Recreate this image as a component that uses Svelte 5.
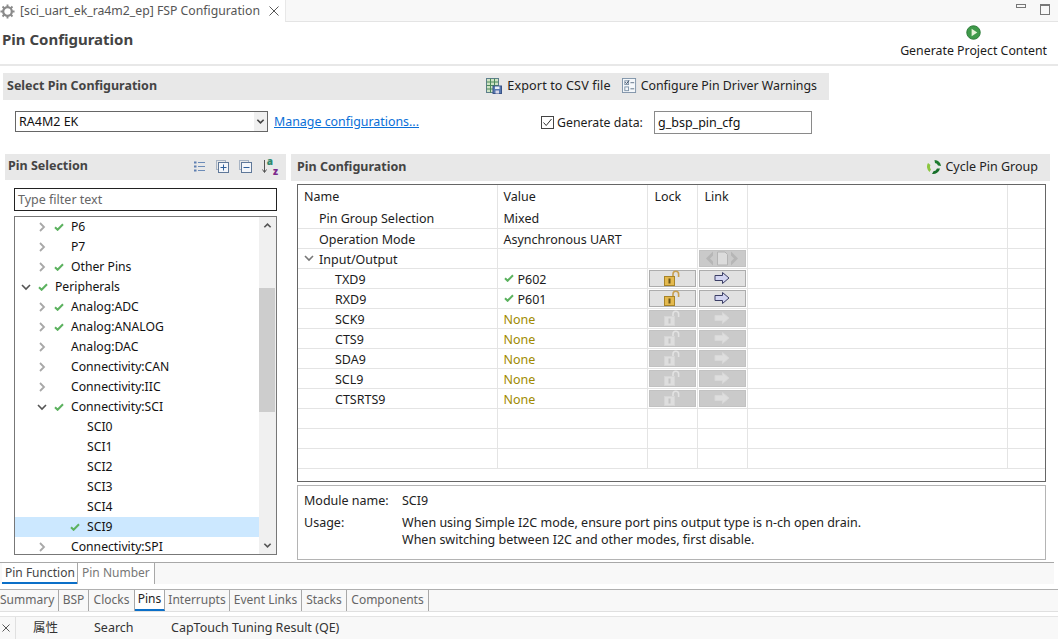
<script lang="ts">
	type TreeRow = { label: string; depth: number; open?: boolean; leaf?: boolean; ok?: boolean; selected?: boolean };
	type PinRow = { name: string; depth: number; value?: string; state?: 'ok' | 'none'; open?: boolean; controls?: 'on' | 'off' | 'group' };

	const tree: TreeRow[] = [
		{ label: 'P6', depth: 1, ok: true },
		{ label: 'P7', depth: 1 },
		{ label: 'Other Pins', depth: 1, ok: true },
		{ label: 'Peripherals', depth: 0, open: true, ok: true },
		{ label: 'Analog:ADC', depth: 1, ok: true },
		{ label: 'Analog:ANALOG', depth: 1, ok: true },
		{ label: 'Analog:DAC', depth: 1 },
		{ label: 'Connectivity:CAN', depth: 1 },
		{ label: 'Connectivity:IIC', depth: 1 },
		{ label: 'Connectivity:SCI', depth: 1, open: true, ok: true },
		{ label: 'SCI0', depth: 2, leaf: true },
		{ label: 'SCI1', depth: 2, leaf: true },
		{ label: 'SCI2', depth: 2, leaf: true },
		{ label: 'SCI3', depth: 2, leaf: true },
		{ label: 'SCI4', depth: 2, leaf: true },
		{ label: 'SCI9', depth: 2, leaf: true, ok: true, selected: true },
		{ label: 'Connectivity:SPI', depth: 1 }
	];

	const pins: PinRow[] = [
		{ name: 'Pin Group Selection', depth: 1, value: 'Mixed' },
		{ name: 'Operation Mode', depth: 1, value: 'Asynchronous UART' },
		{ name: 'Input/Output', depth: 0, open: true, controls: 'group' },
		{ name: 'TXD9', depth: 2, value: 'P602', state: 'ok', controls: 'on' },
		{ name: 'RXD9', depth: 2, value: 'P601', state: 'ok', controls: 'on' },
		{ name: 'SCK9', depth: 2, value: 'None', state: 'none', controls: 'off' },
		{ name: 'CTS9', depth: 2, value: 'None', state: 'none', controls: 'off' },
		{ name: 'SDA9', depth: 2, value: 'None', state: 'none', controls: 'off' },
		{ name: 'SCL9', depth: 2, value: 'None', state: 'none', controls: 'off' },
		{ name: 'CTSRTS9', depth: 2, value: 'None', state: 'none', controls: 'off' },
		{ name: '', depth: 0 },
		{ name: '', depth: 0 },
		{ name: '', depth: 0 }
	];

	const pageTabs = [
		{ label: 'Summary', width: 59 },
		{ label: 'BSP', width: 30 },
		{ label: 'Clocks', width: 46 },
		{ label: 'Pins', width: 30 },
		{ label: 'Interrupts', width: 65 },
		{ label: 'Event Links', width: 72 },
		{ label: 'Stacks', width: 45 },
		{ label: 'Components', width: 82 }
	];
</script>

{#snippet check()}
	<svg class="check" viewBox="0 0 10 8" width="10" height="8">
		<path d="M1 4.2 L3.6 6.8 L9 1.2" fill="none" stroke="#5cb25f" stroke-width="2" />
	</svg>
{/snippet}

{#snippet chevron(open: boolean, color: string)}
	<svg class="chev" viewBox="0 0 10 10" width="10" height="10">
		{#if open}
			<path d="M1 3 L5 7 L9 3" fill="none" stroke={color} stroke-width="1.6" />
		{:else}
			<path d="M3 1 L7 5 L3 9" fill="none" stroke={color} stroke-width="1.8" />
		{/if}
	</svg>
{/snippet}

{#snippet lock(on: boolean)}
	<svg viewBox="0 0 16 16" width="16" height="16">
		<path d="M9 7 V4 A2.8 2.8 0 0 1 14.6 4 V7" fill="none" stroke={on ? '#c8a050' : '#e2e2e2'} stroke-width="1.6" />
		<rect x="0.5" y="6.5" width="10" height="9" fill={on ? '#e3b94e' : '#dedede'} stroke={on ? '#a88428' : '#d6d6d6'} />
		<rect x="4.5" y="8.5" width="2" height="5" fill={on ? '#6b5518' : '#c4c4c4'} />
	</svg>
{/snippet}

{#snippet arrow(on: boolean)}
	<svg viewBox="0 0 16 14" width="16" height="14">
		<path d="M1 4.5 H8.5 V1.5 L15 7 L8.5 12.5 V9.5 H1 Z" fill={on ? '#d4d6f2' : '#dedede'} stroke={on ? '#3c3f66' : '#d8d8d8'} />
	</svg>
{/snippet}

<div class="page">
	<div class="tabbar">
		<div class="editor-tab">
			<svg viewBox="0 0 16 16" width="15" height="15">
				<circle cx="8" cy="8" r="4.6" fill="none" stroke="#8a8a8a" stroke-width="2.4" />
				<path d="M8 0.5 V3 M8 13 V15.5 M0.5 8 H3 M13 8 H15.5 M2.7 2.7 L4.5 4.5 M11.5 11.5 L13.3 13.3 M2.7 13.3 L4.5 11.5 M11.5 4.5 L13.3 2.7" stroke="#8a8a8a" stroke-width="2" />
			</svg>
			<span class="editor-title">[sci_uart_ek_ra4m2_ep] FSP Configuration</span>
			<svg class="close" viewBox="0 0 10 10" width="10" height="10">
				<path d="M0.5 0.5 L9.5 9.5 M9.5 0.5 L0.5 9.5" stroke="#444" stroke-width="0.9" />
			</svg>
		</div>
		<div class="tabbar-rest">
			<span class="win-min"></span>
			<span class="win-max"></span>
		</div>
	</div>

	<header class="head">
		<h1>Pin Configuration</h1>
		<div class="generate">
			<svg viewBox="0 0 16 16" width="15" height="15">
				<circle cx="8" cy="8" r="7.2" fill="#3f9a4a" stroke="#2c7a38" />
				<path d="M6 4 L12 8 L6 12 Z" fill="#e6f3d8" />
			</svg>
			<span>Generate Project Content</span>
		</div>
	</header>

	<section class="select">
		<div class="section-bar select-bar">
			<strong>Select Pin Configuration</strong>
			<div class="bar-actions">
				<span class="action export">
					<svg viewBox="0 0 16 16" width="16" height="16">
						<rect x="0.5" y="0.5" width="12" height="14" fill="#cfe3c4" stroke="#5d7f8c" />
						<path d="M0.5 4 H12.5 M0.5 7.5 H12.5 M0.5 11 H12.5 M4.5 0.5 V15 M8.5 0.5 V15" stroke="#4d8a5a" />
						<rect x="7" y="8" width="8.5" height="7.5" fill="#5878b0" stroke="#3a5488" />
						<rect x="9" y="8.5" width="4.5" height="2.5" fill="#e8eef8" />
						<rect x="9.5" y="12.5" width="3.5" height="3" fill="#d8d8e8" />
					</svg>
					Export to CSV file
				</span>
				<span class="action warnings">
					<svg viewBox="0 0 16 16" width="15" height="15">
						<rect x="0.5" y="0.5" width="14" height="15" fill="#f4f7fa" stroke="#7f93a8" />
						<rect x="3" y="3" width="4" height="4" fill="none" stroke="#7f93a8" />
						<path d="M3.5 4.5 L5 6 L7.5 2.5" fill="none" stroke="#3a4a60" />
						<rect x="3" y="9.5" width="4" height="4" fill="none" stroke="#7f93a8" />
						<path d="M9 5 H13 M9 11.5 H13" stroke="#5f7388" />
					</svg>
					Configure Pin Driver Warnings
				</span>
			</div>
		</div>
		<div class="select-form">
			<div class="combo">
				<span>RA4M2 EK</span>
				<span class="combo-btn">
					<svg viewBox="0 0 10 10" width="9" height="9"><path d="M1.5 3 L5 6.5 L8.5 3" fill="none" stroke="#444" stroke-width="1.8" /></svg>
				</span>
			</div>
			<a class="manage" href="#manage">Manage configurations...</a>
			<span class="gen-check">
				<svg viewBox="0 0 13 13" width="13" height="13">
					<rect x="0.5" y="0.5" width="12" height="12" fill="#fff" stroke="#444" />
					<path d="M2.5 6.5 L5.2 9.5 L10.5 3" fill="none" stroke="#333" />
				</svg>
				Generate data:
			</span>
			<div class="gen-input">g_bsp_pin_cfg</div>
		</div>
	</section>

	<div class="columns">
		<section class="left">
			<div class="section-bar left-bar">
				<strong>Pin Selection</strong>
				<div class="tools">
					<svg viewBox="0 0 13 13" width="13" height="13">
						<path d="M1 2.5 H3.5 M1 6.5 H3.5 M1 10.5 H3.5" stroke="#5f7fb0" stroke-width="2" />
						<path d="M5 2.5 H12 M5 6.5 H12 M5 10.5 H12" stroke="#6c8cb8" />
					</svg>
					<svg viewBox="0 0 13 13" width="13" height="13">
						<rect x="0.5" y="0.5" width="9" height="9" fill="none" stroke="#a8b4c4" />
						<rect x="2.5" y="2.5" width="10" height="10" fill="#f4f6fa" stroke="#5f7899" />
						<path d="M7.5 4.5 V10.5 M4.5 7.5 H10.5" stroke="#2f5f9a" />
					</svg>
					<svg viewBox="0 0 13 13" width="13" height="13">
						<rect x="0.5" y="0.5" width="9" height="9" fill="none" stroke="#a8b4c4" />
						<rect x="2.5" y="2.5" width="10" height="10" fill="#f4f6fa" stroke="#5f7899" />
						<path d="M4.5 7.5 H10.5" stroke="#2f5f9a" />
					</svg>
					<span class="sort">
						<svg viewBox="0 0 5 15" width="5" height="15"><path d="M2.5 1 V13 M0.5 10.5 L2.5 13.5 L4.5 10.5" fill="none" stroke="#555" /></svg>
						<span class="sort-az"><b class="a">a</b><b class="z">z</b></span>
					</span>
				</div>
			</div>
			<div class="filter">Type filter text</div>
			<div class="tree">
				<div class="tree-rows">
					{#each tree as row}
						<div class="tree-row" class:selected={row.selected} data-depth={row.depth}>
							<span class="slot">
								{#if !row.leaf}{@render chevron(!!row.open, row.open ? '#555' : '#a8a8a8')}{/if}
							</span>
							<span class="slot">
								{#if row.ok}{@render check()}{/if}
							</span>
							<span class="tree-label">{row.label}</span>
						</div>
					{/each}
				</div>
				<div class="scroll">
					<span class="scroll-arrow">
						<svg viewBox="0 0 10 10" width="9" height="9"><path d="M1.5 7 L5 3.5 L8.5 7" fill="none" stroke="#555" stroke-width="1.8" /></svg>
					</span>
					<span class="scroll-gap"></span>
					<span class="scroll-thumb"></span>
					<span class="scroll-rest"></span>
					<span class="scroll-arrow">
						<svg viewBox="0 0 10 10" width="9" height="9"><path d="M1.5 3 L5 6.5 L8.5 3" fill="none" stroke="#555" stroke-width="1.8" /></svg>
					</span>
				</div>
			</div>
		</section>

		<section class="right">
			<div class="section-bar right-bar">
				<strong>Pin Configuration</strong>
				<span class="action cycle">
					<svg viewBox="0 0 16 16" width="16" height="16">
						<path d="M8.5 1 A7 7 0 0 1 15 7 L12 6.5 A4 4 0 0 0 9 4 Z" fill="#1d7a2e" />
						<path d="M14 9.5 A7 7 0 0 1 6 15 L7.5 12.2 A4 4 0 0 0 11 9.5 Z" fill="#17702a" />
						<path d="M3.5 13 A7 7 0 0 1 2 4 L4.5 6 A4 4 0 0 0 5 10.5 Z" fill="#8cc63f" />
					</svg>
					Cycle Pin Group
				</span>
			</div>
			<div class="table-wrap">
				<table>
					<colgroup>
						<col class="c-name" />
						<col class="c-value" />
						<col class="c-small" />
						<col class="c-small" />
						<col />
						<col class="c-last" />
					</colgroup>
					<thead>
						<tr>
							<th>Name</th>
							<th>Value</th>
							<th>Lock</th>
							<th>Link</th>
							<th></th>
							<th></th>
						</tr>
					</thead>
					<tbody>
						{#each pins as pin}
							<tr>
								<td>
									<span class="pin-name" data-depth={pin.depth}>
										{#if pin.open}{@render chevron(true, '#777')}{/if}
										{pin.name}
									</span>
								</td>
								<td>
									<span class="value-cell">
										{#if pin.state === 'ok'}{@render check()}{/if}
										<span class:none={pin.state === 'none'}>{pin.value ?? ''}</span>
									</span>
								</td>
								<td class="btn-cell">
									{#if pin.controls === 'on' || pin.controls === 'off'}
										<span class="cell-btn" class:off={pin.controls === 'off'}>{@render lock(pin.controls === 'on')}</span>
									{/if}
								</td>
								<td class="btn-cell">
									{#if pin.controls === 'on' || pin.controls === 'off'}
										<span class="cell-btn" class:off={pin.controls === 'off'}>{@render arrow(pin.controls === 'on')}</span>
									{:else if pin.controls === 'group'}
										<span class="cell-btn off">
											<svg viewBox="0 0 34 15" width="34" height="15">
												<path d="M8 0.5 L1 7.5 L8 14.5 V10.5 L5 7.5 L8 4.5 Z M26 0.5 L33 7.5 L26 14.5 V10.5 L29 7.5 L26 4.5 Z" fill="#b6b6b6" />
												<path d="M12.5 1 H20 L22.5 3.5 V14 H12.5 Z" fill="#dcdcdc" stroke="#b4b4b4" />
											</svg>
										</span>
									{/if}
								</td>
								<td></td>
								<td></td>
							</tr>
						{/each}
					</tbody>
				</table>
			</div>
			<div class="details">
				<div class="detail-row">
					<span>Module name:</span>
					<span>SCI9</span>
				</div>
				<div class="detail-row usage">
					<span>Usage:</span>
					<span>When using Simple I2C mode, ensure port pins output type is n-ch open drain.<br />When switching between I2C and other modes, first disable.</span>
				</div>
			</div>
		</section>
	</div>

	<div class="subtabs">
		<span class="subtab active">Pin Function</span>
		<span class="subtab second">Pin Number</span>
	</div>

	<div class="pagetabs">
		{#each pageTabs as tab}
			<span class="pagetab" class:active={tab.label === 'Pins'} style="width: {tab.width}px">{tab.label}</span>
		{/each}
	</div>

	<div class="views">
		<span class="views-close">
			<svg viewBox="0 0 8 8" width="8" height="8"><path d="M0.5 0.5 L7.5 7.5 M7.5 0.5 L0.5 7.5" stroke="#444" stroke-width="0.9" /></svg>
		</span>
		<span class="view v1">属性</span>
		<span class="view v2">Search</span>
		<span class="view">CapTouch Tuning Result (QE)</span>
	</div>
</div>

<style>
	:global(body) {
		margin: 0;
		background: #fff;
		overflow: hidden;
	}

	.page {
		width: 1058px;
		height: 639px;
		overflow: hidden;
		display: flex;
		flex-direction: column;
		font-family: 'Noto Sans', 'Noto Sans CJK SC', sans-serif;
		font-size: 12.5px;
		line-height: 20px;
		color: #1c1c1c;
		background: #fff;
	}

	svg {
		flex: none;
		display: block;
	}

	.tabbar {
		display: flex;
		height: 22px;
		flex: none;
	}

	.editor-tab {
		width: 285px;
		flex: none;
		display: flex;
		align-items: center;
		gap: 5px;
		color: #555;
	}

	.editor-title {
		white-space: nowrap;
		font-size: 12.25px;
	}

	.editor-tab .close {
		margin-left: 4px;
	}

	.tabbar-rest {
		flex: 1;
		display: flex;
		justify-content: flex-end;
		gap: 14px;
		padding: 4px 8px 0 0;
		background: #f8f8f8;
		border-left: 1px solid #e8e8e8;
		border-bottom: 1px solid #e4e4e4;
	}

	.win-min {
		width: 8px;
		height: 2px;
		border: 1px solid #777;
	}

	.win-max {
		width: 8px;
		height: 8px;
		border: 1px solid #777;
		border-top-width: 2px;
	}

	.head {
		flex: none;
		height: 42px;
		display: flex;
		justify-content: space-between;
		border-bottom: 2px solid #e8e8e8;
		background: #fff;
	}

	h1 {
		margin: 6px 0 0 2px;
		font-size: 15px;
		line-height: 22px;
		font-weight: 700;
		color: #444;
	}

	.generate {
		display: flex;
		flex-direction: column;
		align-items: center;
		padding: 3px 11px 0 0;
		gap: 1px;
		font-size: 12.35px;
	}

	.select {
		flex: none;
		padding: 7px 0 0 3px;
	}

	.section-bar {
		display: flex;
		align-items: center;
		justify-content: space-between;
		background: #e8e8e8;
		box-sizing: border-box;
		padding-bottom: 2px;
	}

	.section-bar strong {
		color: #444;
		font-weight: 700;
	}

	.select-bar {
		width: 826px;
		height: 27px;
		padding-left: 4px;
		padding-right: 12px;
	}

	.bar-actions {
		display: flex;
		gap: 11px;
	}

	.action {
		display: inline-flex;
		align-items: center;
		gap: 4px;
		color: #222;
	}

	.action.export {
		font-size: 12.6px;
		gap: 5px;
		letter-spacing: 0.01em;
	}

	.action.warnings {
		font-size: 12.36px;
	}

	.select-form {
		display: flex;
		align-items: flex-start;
		height: 23px;
		margin-top: 11px;
		padding-left: 12px;
	}

	.combo {
		width: 253px;
		height: 21px;
		box-sizing: border-box;
		display: flex;
		justify-content: space-between;
		align-items: center;
		padding-left: 3px;
		border: 1px solid #666;
		line-height: 19px;
		color: #111;
	}

	.combo-btn {
		width: 13px;
		align-self: stretch;
		display: flex;
		align-items: center;
		justify-content: center;
		background: #f0f0f0;
	}

	.manage {
		margin-left: 6px;
		color: #0a6fd8;
		text-decoration: underline;
		width: 267px;
		font-size: 12.4px;
		line-height: 21px;
	}

	.gen-check {
		display: inline-flex;
		align-items: center;
		gap: 3px;
		width: 113px;
		height: 23px;
		white-space: nowrap;
		font-size: 12.3px;
	}

	.gen-input {
		width: 158px;
		height: 23px;
		box-sizing: border-box;
		border: 1px solid #8a8a8a;
		padding-left: 3px;
		line-height: 21px;
		color: #111;
	}

	.columns {
		flex: none;
		height: 408px;
		margin-top: 20px;
		display: flex;
	}

	.left {
		width: 281px;
		margin-left: 5px;
	}

	.left-bar {
		height: 26px;
		padding-left: 3px;
		padding-right: 8px;
	}

	.tools {
		display: flex;
		align-items: center;
		gap: 10px;
	}

	.sort {
		display: flex;
		align-items: center;
	}

	.sort-az {
		display: flex;
		flex-direction: column;
		font-size: 10px;
		line-height: 10px;
		font-weight: 700;
	}

	.sort-az .a {
		color: #2e8a6e;
	}

	.sort-az .z {
		color: #7d2a8c;
		margin-left: 6.2px;
	}

	.filter {
		box-sizing: border-box;
		width: 263px;
		height: 23px;
		margin: 8px 0 0 9px;
		padding-left: 3px;
		border: 1px solid #222;
		line-height: 21px;
		color: #666;
	}

	.tree {
		box-sizing: border-box;
		width: 263px;
		height: 339px;
		margin: 5px 0 0 9px;
		display: flex;
		border: 1px solid #777;
		overflow: hidden;
	}

	.tree-rows {
		width: 244px;
		flex: none;
	}

	.tree-row {
		height: 20px;
		display: flex;
		align-items: center;
	}

	.tree-row[data-depth='0'] {
		padding-left: 5px;
	}

	.tree-row[data-depth='1'] {
		padding-left: 21px;
	}

	.tree-row[data-depth='2'] {
		padding-left: 37px;
	}

	.tree-row.selected {
		background: #cce8ff;
	}

	.slot {
		width: 18px;
		height: 20px;
		flex: none;
		display: flex;
		align-items: center;
		padding-left: 1px;
		box-sizing: border-box;
	}

	.slot + .slot {
		width: 17px;
		padding-left: 0;
	}

	.tree-label {
		color: #111;
		white-space: nowrap;
		font-size: 12.2px;
	}

	.scroll {
		width: 17px;
		flex: none;
		display: flex;
		flex-direction: column;
		background: #f0f0f0;
	}

	.scroll-arrow {
		height: 17px;
		flex: none;
		display: flex;
		align-items: center;
		justify-content: center;
	}

	.scroll-gap {
		height: 54px;
		flex: none;
	}

	.scroll-thumb {
		height: 124px;
		flex: none;
		margin-right: 1px;
		background: #cdcdcd;
	}

	.scroll-rest {
		flex: 1;
	}

	.right {
		width: 759px;
		margin-left: 5px;
	}

	.right-bar {
		height: 27px;
		padding-left: 6px;
		padding-right: 12px;
	}

	.cycle {
		gap: 3px;
	}

	.table-wrap {
		box-sizing: border-box;
		width: 749px;
		height: 298px;
		margin: 3px 0 0 6px;
		border: 1px solid #666;
		overflow: hidden;
	}

	table {
		width: 100%;
		table-layout: fixed;
		border-collapse: collapse;
	}

	.c-name {
		width: 199px;
	}

	.c-value {
		width: 150px;
	}

	.c-small {
		width: 50px;
	}

	.c-last {
		width: 38px;
	}

	th,
	td {
		height: 20px;
		box-sizing: border-box;
		padding: 0 0 0 6px;
		font-weight: 400;
		text-align: left;
		white-space: nowrap;
		line-height: 19px;
		color: #1c1c1c;
		border-right: 1px solid #e4e4e4;
		border-bottom: 1px solid #e4e4e4;
	}

	th {
		height: 23px;
		border-bottom: none;
	}

	th:nth-child(n + 3) {
		padding-left: 7px;
	}

	th:last-child,
	td:last-child {
		border-right: none;
	}

	.value-cell,
	.pin-name {
		display: flex;
		align-items: flex-start;
		height: 19px;
		line-height: 21px;
	}

	.value-cell {
		gap: 4px;
	}

	.pin-name {
		gap: 5px;
	}

	.value-cell :global(svg),
	.pin-name :global(svg) {
		align-self: center;
	}

	.pin-name[data-depth='1'] {
		padding-left: 15px;
	}

	.pin-name[data-depth='2'] {
		padding-left: 31px;
	}

	.none {
		color: #a08a00;
	}

	.btn-cell {
		padding: 0 0 0 1px;
	}

	.cell-btn {
		width: 47px;
		height: 17px;
		box-sizing: border-box;
		display: flex;
		align-items: center;
		justify-content: center;
		background: #e1e1e1;
		border: 1px solid #adadad;
	}

	.cell-btn.off {
		background: #cacaca;
		border-color: #c2c2c2;
	}

	.details {
		box-sizing: border-box;
		width: 749px;
		height: 75px;
		margin: 3px 0 0 6px;
		padding: 5px 6px;
		border: 1px solid #b4b4b4;
		color: #222;
	}

	.detail-row {
		display: grid;
		grid-template-columns: 98px 1fr;
	}

	.detail-row.usage {
		margin-top: 3px;
		line-height: 17px;
	}

	.subtabs {
		flex: none;
		height: 21px;
		display: flex;
		align-items: stretch;
		padding-left: 2px;
		width: 1052px;
		background: #f8f8f8;
		border-top: 1px solid #a8a8a8;
		white-space: nowrap;
		font-size: 12px;
	}

	.subtab {
		padding: 0 3px;
		color: #444;
		box-sizing: border-box;
	}

	.subtab.active {
		background: #fff;
		border-bottom: 2px solid #0b6fc8;
		line-height: 20px;
		width: 75px;
	}

	.subtab.second {
		width: 78px;
		padding-left: 4px;
		color: #777;
		border-left: 1px solid #a8a8a8;
		border-right: 1px solid #a8a8a8;
		background: #fff;
	}

	.pagetabs {
		flex: none;
		height: 21px;
		margin-top: 5px;
		display: flex;
		background: #f8f8f8;
		border-top: 1px solid #b0b0b0;
		border-bottom: 1px solid #e0e0e0;
		color: #666;
		font-size: 12px;
		white-space: nowrap;
	}

	.pagetab {
		box-sizing: border-box;
		text-align: center;
		border-right: 1px solid #a8a8a8;
	}

	.pagetab:first-child {
		padding-right: 4px;
	}

	.pagetab.active {
		color: #222;
		background: #fff;
		line-height: 18px;
		border-bottom: 2px solid #0b6fc8;
	}

	.views {
		flex: 1;
		margin-top: 4px;
		display: flex;
		align-items: center;
		background: #f8f8f8;
		border-top: 1px solid #e4e4e4;
		color: #333;
		white-space: nowrap;
	}

	.views-close {
		width: 16px;
		align-self: stretch;
		box-sizing: border-box;
		display: flex;
		align-items: center;
		padding-left: 2px;
		border-right: 1px solid #e0e0e0;
	}

	.view.v1 {
		margin-left: 17px;
		width: 61px;
	}

	.view.v2 {
		width: 77px;
	}
</style>
